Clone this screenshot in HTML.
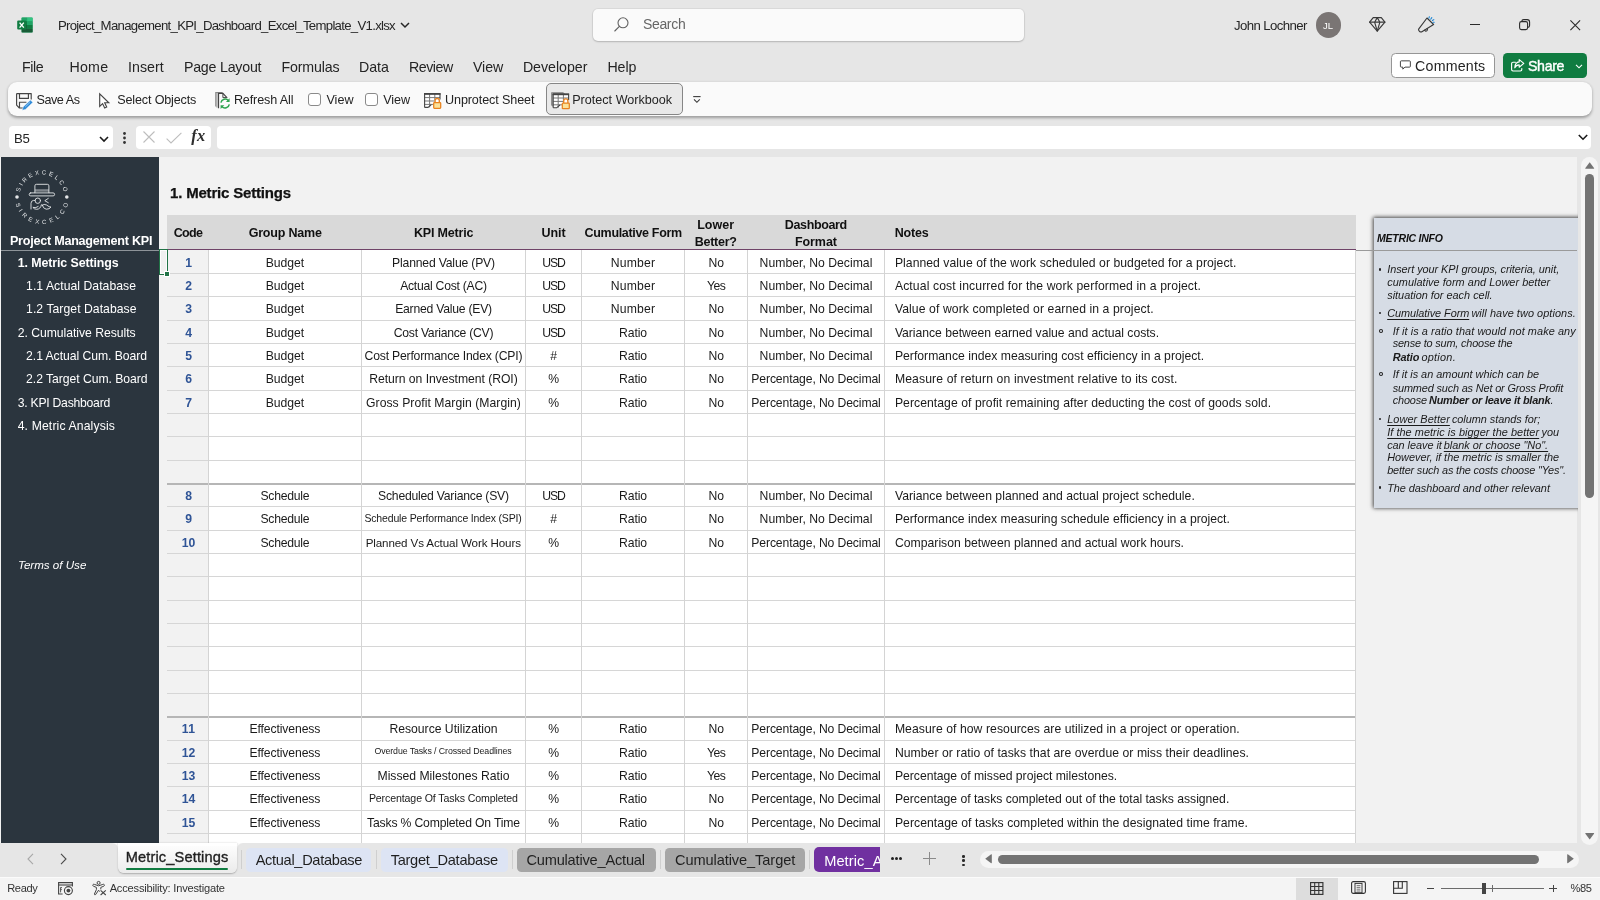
<!DOCTYPE html>
<html lang="en">
<head>
<meta charset="utf-8">
<title>Project_Management_KPI_Dashboard_Excel_Template_V1.xlsx</title>
<style>
*{box-sizing:border-box;margin:0;padding:0}
html,body{width:1600px;height:900px;overflow:hidden}
body{position:relative;background:#e6e6e6;will-change:transform;font-family:"Liberation Sans",sans-serif;color:#242424}
.abs{position:absolute}
.t{position:absolute;white-space:nowrap;line-height:1;color:#242424}
svg{position:absolute;overflow:visible}

/* sheet */
#sheet{left:0;top:157.4px;width:1577.3px;height:685.6px;background:#f2f2f2}
#side{left:1px;top:157.4px;width:157.6px;height:685.6px;background:#2b353e}
.tbl{position:absolute;background:#fff}
.codecol{position:absolute;background:#f2f2f2}
.hl{position:absolute;left:167px;width:1188.8px;height:1px;background:#d6d6d6}
.hl.thick{background:#b6b6b6;height:2px}
.vl{position:absolute;width:1px;background:#d4d4d4}
.c{position:absolute;height:23.33px;line-height:23.33px;font-size:12.2px;text-align:center;white-space:nowrap;color:#1a1a1a;letter-spacing:.05px}
.c.code{color:#2f5496;font-weight:bold}
.c.note{text-align:left;padding-left:11px}
.c.sm1{font-size:10px;letter-spacing:0}
.c.sm2{font-size:8px;letter-spacing:0}
.c.sm3{font-size:10px;letter-spacing:0}
.stab{position:absolute;top:847.7px;height:24.6px;border-radius:4.5px}
.sep{position:absolute;top:850px;height:19px;width:1px;background:#cfcfcf}
</style>
</head>
<body>

<!-- ======= TITLE BAR ======= -->
<svg style="left:17px;top:17px" width="16" height="16" viewBox="0 0 16 16"><rect x="4.6" y=".6" width="11" height="14.8" rx="1" fill="#21a366"/><rect x="10.1" y=".6" width="5.5" height="3.7" fill="#33c481"/><rect x="4.6" y=".6" width="5.5" height="3.7" fill="#21a366"/><rect x="4.6" y="4.3" width="5.5" height="3.7" fill="#107c41"/><rect x="10.1" y="4.3" width="5.5" height="3.7" fill="#21a366"/><rect x="4.6" y="8" width="5.5" height="3.7" fill="#185c37"/><rect x="10.1" y="8" width="5.5" height="3.7" fill="#107c41"/><rect x="4.6" y="11.7" width="11" height="3.7" fill="#185c37"/><rect x=".2" y="3.6" width="9" height="9" rx="1" fill="#107c41"/><path d="M2.6 5.6 L6.8 10.6 M6.8 5.6 L2.6 10.6" stroke="#fff" stroke-width="1.35" fill="none"/></svg>
<div class="t" style="left:57.90px;top:18.83px;font-size:13.2px;letter-spacing:-0.708px;color:#262626;">Project_Management_KPI_Dashboard_Excel_Template_V1.xlsx</div>
<svg style="left:400px;top:21px" width="10" height="8" viewBox="0 0 10 8"><path d="M1 2 L5 6 L9 2" fill="none" stroke="#262626" stroke-width="1.5"/></svg>

<div class="abs" style="left:593px;top:9px;width:431px;height:32px;background:#fafafa;border-radius:5px;box-shadow:0 0 0 1px rgba(0,0,0,.05),0 1px 2px rgba(0,0,0,.18)"></div>
<svg style="left:613px;top:16px" width="17" height="17" viewBox="0 0 17 17"><circle cx="10" cy="6.8" r="5" fill="none" stroke="#616161" stroke-width="1.1"/><path d="M6.4 10.4 L1.8 15" stroke="#616161" stroke-width="1.1" fill="none" stroke-linecap="round"/></svg>
<div class="t" style="left:642.90px;top:17.15px;font-size:14.0px;letter-spacing:-0.310px;color:#666666;">Search</div>

<div class="t" style="left:1234.00px;top:18.83px;font-size:13.2px;letter-spacing:-0.591px;color:#262626;">John Lochner</div>
<div class="abs" style="left:1315.7px;top:12.4px;width:25.2px;height:25.2px;border-radius:50%;background:#7a7574"></div>
<div class="t" style="left:1322.90px;top:20.96px;font-size:9.5px;letter-spacing:0.233px;color:#ffffff;">JL</div>
<svg style="left:1369.3px;top:17px" width="16.5" height="14.7" viewBox="0 0 16.5 14.7"><path d="M4.2 .6 H12.3 L15.9 5.2 L8.25 14.1 L.6 5.2 Z" fill="none" stroke="#3a3a3a" stroke-width="1.15" stroke-linejoin="round" stroke-linecap="round"/><path d="M.6 5.2 H15.9 M5.6 5.2 L8.25 .6 L10.9 5.2 L8.25 14.1 Z" fill="none" stroke="#3a3a3a" stroke-width="1.15" stroke-linejoin="round" stroke-linecap="round"/></svg>
<svg style="left:1417.7px;top:16.25px" width="16.5" height="16.5" viewBox="0 0 16.5 16.5"><path d="M9 2 L15.6 8.5 L3.5 15.9 Q2.5 16.3 1.7 15.5 L.9 14.7 Q.2 13.9 .8 12.9 Z" fill="none" stroke="#3a3a3a" stroke-width="1.15" stroke-linejoin="round" stroke-linecap="round"/><path d="M6.6 14.2 Q7.6 15.9 9 14.6 Q9.8 13.6 9.2 12.6" fill="none" stroke="#3a3a3a" stroke-width="1.15" stroke-linejoin="round" stroke-linecap="round"/><path d="M11.4 .7 L10.9 2.2 M13.8 1.6 L12.7 3.2 M15.8 3.6 L14.4 4.5 M16.2 6.2 L14.9 6.2" fill="none" stroke="#1b86d6" stroke-width="1.1" stroke-linecap="round"/></svg>
<div class="abs" style="left:1470px;top:23.7px;width:10.2px;height:1.1px;background:#2b2b2b"></div>
<svg style="left:1519.4px;top:19.25px" width="11.2" height="11.2" viewBox="0 0 11.2 11.2"><rect x=".6" y="2.6" width="8" height="8" rx="1.8" fill="none" stroke="#2b2b2b" stroke-width="1.1"/><path d="M2.8 2.4 Q2.9 .6 4.7 .6 H8.2 Q10.6 .6 10.6 3 V6.5 Q10.6 8.3 8.8 8.4" fill="none" stroke="#2b2b2b" stroke-width="1.1"/></svg>
<svg style="left:1569.7px;top:20px" width="10.5" height="10.5" viewBox="0 0 10.5 10.5"><path d="M.4 .4 L10.1 10.1 M10.1 .4 L.4 10.1" stroke="#2b2b2b" stroke-width="1.1" fill="none"/></svg>

<!-- ======= MENU ======= -->
<div class="t" style="left:21.90px;top:59.68px;font-size:14.2px;letter-spacing:-0.345px;">File</div>
<div class="t" style="left:69.40px;top:59.68px;font-size:14.2px;letter-spacing:0.280px;">Home</div>
<div class="t" style="left:127.90px;top:59.68px;font-size:14.2px;letter-spacing:0.081px;">Insert</div>
<div class="t" style="left:183.90px;top:59.68px;font-size:14.2px;letter-spacing:-0.204px;">Page Layout</div>
<div class="t" style="left:281.40px;top:59.68px;font-size:14.2px;letter-spacing:-0.147px;">Formulas</div>
<div class="t" style="left:358.90px;top:59.68px;font-size:14.2px;letter-spacing:0.001px;">Data</div>
<div class="t" style="left:408.90px;top:59.68px;font-size:14.2px;letter-spacing:-0.427px;">Review</div>
<div class="t" style="left:472.90px;top:59.68px;font-size:14.2px;letter-spacing:-0.006px;">View</div>
<div class="t" style="left:522.90px;top:59.68px;font-size:14.2px;letter-spacing:-0.025px;">Developer</div>
<div class="t" style="left:607.40px;top:59.68px;font-size:14.2px;letter-spacing:-0.051px;">Help</div>

<div class="abs" style="left:1391.3px;top:53.2px;width:104px;height:25px;background:#fff;border:1px solid #969696;border-radius:4.5px"></div>
<svg style="left:1400px;top:59.6px" width="11.6" height="10.8" viewBox="0 0 14 13"><path d="M1.5 1 H11.5 Q12.5 1 12.5 2 V7.6 Q12.5 8.6 11.5 8.6 H6 L3.4 11 V8.6 H1.5 Q.5 8.6 .5 7.6 V2 Q.5 1 1.5 1Z" fill="none" stroke="#333" stroke-width="1.1" stroke-linejoin="round"/></svg>
<div class="t" style="left:1415.10px;top:58.88px;font-size:14.2px;letter-spacing:0.206px;color:#242424;">Comments</div>
<div class="abs" style="left:1503.4px;top:53.2px;width:84px;height:25px;background:#107c41;border-radius:4.5px"></div>
<svg style="left:1510px;top:58px" width="16" height="15" viewBox="0 0 16 15"><path d="M5.5 4.2 H3 Q1.6 4.2 1.6 5.6 V11.6 Q1.6 13 3 13 H10.4 Q11.8 13 11.8 11.6 V10.6" fill="none" stroke="#fff" stroke-width="1.15" stroke-linecap="round"/><path d="M9.2 1.6 L13.8 5.4 L9.2 9.2 V6.9 Q6.2 6.9 4.8 9.8 Q5 4.4 9.2 3.9 Z" fill="none" stroke="#fff" stroke-width="1.15" stroke-linejoin="round"/></svg>
<div style="-webkit-text-stroke:.4px #fff"><div class="t" style="left:1528.00px;top:58.88px;font-size:14.2px;letter-spacing:-0.358px;color:#ffffff;">Share</div></div>
<svg style="left:1575px;top:63.6px" width="8" height="5" viewBox="0 0 8 5"><path d="M1 .8 L4 3.8 L7 .8" fill="none" stroke="#fff" stroke-width="1.15"/></svg>

<!-- ======= RIBBON ======= -->
<div class="abs" id="ribbon" style="left:8px;top:82.3px;width:1583.5px;height:34.2px;background:#fafafa;border-radius:9px;box-shadow:0 1.2px 3px rgba(0,0,0,.32)"></div>
<div class="abs" style="left:546.2px;top:83.2px;width:136.4px;height:31.4px;background:#e9e9e9;border:1px solid #868686;border-radius:5px"></div>
<svg style="left:16px;top:92.6px" width="17" height="17" viewBox="0 0 17 17"><path d="M.6 .6 H15.2 V6.5 M.6 .6 V12.2 L3.4 15 H7" fill="none" stroke="#444" stroke-width="1.15" stroke-linejoin="round"/><path d="M3.5 .6 V5.4 H12.4 V.6" fill="none" stroke="#444" stroke-width="1.15"/><path d="M3.5 15 V9.2 H10.4" fill="none" stroke="#444" stroke-width="1.15"/><path d="M7.1 14 L14.5 7 L16.8 9.4 L9.4 16.4 L6.2 17.3 Z" fill="#2b88d8" stroke="#fafafa" stroke-width=".5"/><path d="M9.2 14 L14.2 9.2" stroke="#bfe0f7" stroke-width=".7"/></svg>
<svg style="left:98.9px;top:93.1px" width="10.5" height="15.4" viewBox="0 0 10.5 15.4"><path d="M.7 .8 V13.4 L3.6 10.6 L5.7 15 L7.7 14 L5.7 9.8 H9.8 Z" fill="#fff" stroke="#444" stroke-width="1.15" stroke-linejoin="miter"/></svg>
<svg style="left:215px;top:92.4px" width="16" height="17" viewBox="0 0 16 17"><path d="M.6 .9 V14.6 M1.9 .6 V15.4" stroke="#9a9a9a" stroke-width="1.05" fill="none"/><path d="M.2 .55 H7.6" stroke="#8a8a8a" stroke-width="1.1" fill="none"/><path d="M3.5 16.2 V1.4 H7.9 L12.2 5.8" fill="none" stroke="#444" stroke-width="1.2"/><path d="M7.9 1.4 V5.6 H11.6" fill="none" stroke="#444" stroke-width="1"/><path d="M5.9 10.6 A4.3 4.3 0 0 1 13.4 8.6 M14.3 12.4 A4.3 4.3 0 0 1 6.8 14.5" fill="none" stroke="#2ea44f" stroke-width="1.5"/><path d="M14.6 6.2 V9.9 H10.9 Z M5.6 16.9 V13.2 H9.3 Z" fill="#2ea44f"/></svg>
<svg style="left:424px;top:93.1px" width="17.5" height="15.8" viewBox="0 0 17.5 15.8"><g transform="translate(0,0)"><rect x=".6" y="1" width="15.3" height="13.4" fill="#fff"/><path d="M.6 4.6 H16 M.6 8 H11 M.6 11.4 H9.6 M5.6 1 V14.4 M10.8 1 V7" stroke="#777" stroke-width="1" fill="none"/><path d="M.6 14.4 V.8 H16 V6.6 M.6 14.4 H4 L7.4 11.6" stroke="#444" stroke-width="1.1" fill="none"/><path d="M0 .9 H16.5" stroke="#444" stroke-width="1.8"/><path d="M11.1 9.6 V7.6 A2.1 2.1 0 0 1 15.3 7.6 V9.6" fill="none" stroke="#e8821e" stroke-width="1.35"/><rect x="9.7" y="9.6" width="7" height="5.7" rx=".7" fill="#fbe29a" stroke="#e8821e" stroke-width="1.25"/></g></svg>
<svg style="left:551.25px;top:92.1px" width="17.5" height="17" viewBox="0 0 17.5 17"><path d="M.5 13.6 V.6 H12.6 M1.6 14.4 V1.5 H13.6" fill="none" stroke="#8f8f8f" stroke-width="1"/><g transform="translate(1.6,1.4)"><rect x=".6" y="1" width="15.3" height="13.4" fill="#fff"/><path d="M.6 4.6 H16 M.6 8 H11 M.6 11.4 H9.6 M5.6 1 V14.4 M10.8 1 V7" stroke="#777" stroke-width="1" fill="none"/><path d="M.6 14.4 V.8 H16 V6.6 M.6 14.4 H4 L7.4 11.6" stroke="#444" stroke-width="1.1" fill="none"/><path d="M0 .9 H16.5" stroke="#444" stroke-width="1.8"/><path d="M11.1 9.6 V7.6 A2.1 2.1 0 0 1 15.3 7.6 V9.6" fill="none" stroke="#e8821e" stroke-width="1.35"/><rect x="9.7" y="9.6" width="7" height="5.7" rx=".7" fill="#fbe29a" stroke="#e8821e" stroke-width="1.25"/></g></svg>
<svg style="left:693.4px;top:96px" width="8" height="7" viewBox="0 0 8 7"><path d="M.2 .6 H7.6" stroke="#3a3a3a" stroke-width="1.1" fill="none"/><path d="M1 3.4 L3.9 6.3 L6.8 3.4" stroke="#3a3a3a" stroke-width="1.1" fill="none"/></svg>
<div class="t" style="left:36.50px;top:93.83px;font-size:12.6px;letter-spacing:-0.447px;">Save As</div>
<div class="t" style="left:117.30px;top:93.83px;font-size:12.6px;letter-spacing:-0.167px;">Select Objects</div>
<div class="t" style="left:233.90px;top:93.83px;font-size:12.6px;letter-spacing:-0.130px;">Refresh All</div>
<div class="abs" style="left:308.3px;top:92.8px;width:13px;height:13px;background:#fff;border:1.1px solid #8a8a8a;border-radius:3px"></div>
<div class="t" style="left:326.40px;top:93.83px;font-size:12.6px;letter-spacing:0.054px;">View</div>
<div class="abs" style="left:365.2px;top:92.8px;width:13px;height:13px;background:#fff;border:1.1px solid #8a8a8a;border-radius:3px"></div>
<div class="t" style="left:383.20px;top:93.83px;font-size:12.6px;letter-spacing:-0.071px;">View</div>
<div class="t" style="left:445.00px;top:93.83px;font-size:12.6px;letter-spacing:-0.110px;">Unprotect Sheet</div>
<div class="t" style="left:572.20px;top:93.83px;font-size:12.6px;letter-spacing:0.006px;">Protect Workbook</div>

<!-- ======= FORMULA BAR ======= -->
<div class="abs" style="left:9px;top:126.3px;width:104px;height:22.7px;background:#fff;border-radius:4px"></div>
<div class="abs" style="left:135.7px;top:126.3px;width:75.3px;height:22.7px;background:#fff;border-radius:4px"></div>
<div class="abs" style="left:216.5px;top:126.3px;width:1374.7px;height:22.7px;background:#fff;border-radius:4px"></div>
<div class="t" style="left:14.00px;top:131.63px;font-size:13.2px;letter-spacing:-0.223px;color:#262626;">B5</div>
<svg style="left:98.5px;top:136px" width="10" height="7" viewBox="0 0 10 7"><path d="M1 1 L5 5 L9 1" fill="none" stroke="#1a1a1a" stroke-width="1.6"/></svg>
<svg style="left:122.9px;top:132.4px" width="3" height="12" viewBox="0 0 3 12"><circle cx="1.5" cy="1.5" r="1.4" fill="#333"/><circle cx="1.5" cy="6" r="1.4" fill="#333"/><circle cx="1.5" cy="10.5" r="1.4" fill="#333"/></svg>
<svg style="left:142.5px;top:131.2px" width="12" height="12" viewBox="0 0 12 12"><path d="M.5 .5 L11.5 11.5 M11.5 .5 L.5 11.5" stroke="#bdbdbd" stroke-width="1.1" fill="none"/></svg>
<svg style="left:165.5px;top:131.5px" width="16" height="12" viewBox="0 0 16 12"><path d="M.6 6.6 L5 11 L15.4 .8" stroke="#bdbdbd" stroke-width="1.1" fill="none"/></svg>
<div class="t" style="left:191.2px;top:127.6px;font-family:'Liberation Serif',serif;font-style:italic;font-weight:bold;font-size:16.5px;color:#2f2f2f;letter-spacing:.4px">fx</div>
<svg style="left:1577.5px;top:133.5px" width="10" height="7" viewBox="0 0 10 7"><path d="M.8 1 L5 5.2 L9.2 1" fill="none" stroke="#1a1a1a" stroke-width="1.6"/></svg>

<!-- ======= SHEET ======= -->
<div class="abs" id="sheet"></div>
<div class="abs" id="side"></div>
<svg style="left:0;top:157px" width="160" height="90" viewBox="0 157 160 90"><defs><path id="lgt" d="M19.93 192.13 A22.5 22.5 0 0 1 63.78 191.75"/><path id="lgb" d="M15.66 203.79 A27.1 27.1 0 0 0 68.08 204.01"/></defs><text font-family="Liberation Sans, sans-serif" font-size="6" fill="#e4e6e8"><textPath href="#lgt" textLength="60.5" lengthAdjust="spacing">SIREXCELCO</textPath></text><text font-family="Liberation Sans, sans-serif" font-size="6" fill="#e4e6e8"><textPath href="#lgb" textLength="71.2" lengthAdjust="spacing">SIREXCELCO</textPath></text><circle cx="17.0" cy="197.0" r="1.8" fill="#e4e6e8"/><circle cx="66.8" cy="197.0" r="1.8" fill="#e4e6e8"/><path d="M34.9 192.7 V185.8 Q34.9 184.3 36.4 184.3 H47.4 Q48.9 184.3 48.9 185.8 V192.7" fill="none" stroke="#e4e6e8" stroke-width="0.9" stroke-linecap="round" stroke-linejoin="round"/><path d="M34.9 189.9 H48.9 M34.9 191 H48.9" fill="none" stroke="#e4e6e8" stroke-width=".6"/><rect x="29.2" y="192.9" width="25.4" height="3" rx="1.5" fill="none" stroke="#e4e6e8" stroke-width="0.9" stroke-linecap="round" stroke-linejoin="round"/><circle cx="37.8" cy="200.7" r="2.7" fill="none" stroke="#e4e6e8" stroke-width="0.9" stroke-linecap="round" stroke-linejoin="round"/><path d="M31 209 V203.4 Q31 200.6 33.6 200.4 L35 200.5" fill="none" stroke="#e4e6e8" stroke-width="0.9" stroke-linecap="round" stroke-linejoin="round"/><path d="M48.3 198.4 L44.8 200.7 L48.3 202.7" fill="none" stroke="#e4e6e8" stroke-width="0.9" stroke-linecap="round" stroke-linejoin="round"/><path d="M41.4 204.8 Q40.6 209.2 36.6 209.3 Q34 209.2 32.9 207.4 Q36 208.3 38.2 206.5" fill="none" stroke="#e4e6e8" stroke-width="0.9" stroke-linecap="round" stroke-linejoin="round"/><path d="M42.3 205.2 Q44 203.6 46.6 205 Q49.4 207.4 51 207 Q49.4 209.4 46.2 209.2 Q43 208.6 42.3 205.2 Z" fill="none" stroke="#e4e6e8" stroke-width="0.9" stroke-linecap="round" stroke-linejoin="round"/></svg>
<div class="t" style="left:9.90px;top:234.93px;font-size:12.6px;letter-spacing:-0.243px;font-weight:bold;color:#ffffff;">Project Management KPI</div>
<div class="t" style="left:17.70px;top:256.60px;font-size:12.4px;letter-spacing:-0.093px;font-weight:bold;color:#ffffff;">1. Metric Settings</div>
<div class="t" style="left:26.10px;top:279.57px;font-size:12.2px;letter-spacing:0.042px;color:#ffffff;">1.1 Actual Database</div>
<div class="t" style="left:26.10px;top:302.57px;font-size:12.2px;letter-spacing:0.050px;color:#ffffff;">1.2 Target Database</div>
<div class="t" style="left:17.70px;top:326.57px;font-size:12.2px;letter-spacing:-0.031px;color:#ffffff;">2. Cumulative Results</div>
<div class="t" style="left:26.10px;top:349.57px;font-size:12.2px;letter-spacing:-0.051px;color:#ffffff;">2.1 Actual Cum. Board</div>
<div class="t" style="left:26.10px;top:372.57px;font-size:12.2px;letter-spacing:-0.044px;color:#ffffff;">2.2 Target Cum. Board</div>
<div class="t" style="left:17.70px;top:396.57px;font-size:12.2px;letter-spacing:-0.244px;color:#ffffff;">3. KPI Dashboard</div>
<div class="t" style="left:17.70px;top:419.57px;font-size:12.2px;letter-spacing:0.138px;color:#ffffff;">4. Metric Analysis</div>
<div class="t" style="left:17.90px;top:558.98px;font-size:11.6px;letter-spacing:-0.004px;font-style:italic;color:#ffffff;">Terms of Use</div>

<div style="-webkit-text-stroke:.25px #111"><div class="t" style="left:170.00px;top:184.80px;font-size:15.0px;letter-spacing:-0.178px;font-weight:bold;color:#111111;">1. Metric Settings</div></div>
<div class="abs" style="left:167px;top:215px;width:1188.8px;height:35px;background:#d9d9d9"></div>
<div class="t" style="left:173.65px;top:227.42px;font-size:12.5px;letter-spacing:-0.625px;font-weight:bold;color:#111;">Code</div>
<div class="t" style="left:248.65px;top:227.42px;font-size:12.5px;letter-spacing:-0.201px;font-weight:bold;color:#111;">Group Name</div>
<div class="t" style="left:413.90px;top:227.42px;font-size:12.5px;letter-spacing:-0.163px;font-weight:bold;color:#111;">KPI Metric</div>
<div class="t" style="left:541.40px;top:227.42px;font-size:12.5px;letter-spacing:0.025px;font-weight:bold;color:#111;">Unit</div>
<div class="t" style="left:584.60px;top:227.42px;font-size:12.5px;letter-spacing:-0.327px;font-weight:bold;color:#111;">Cumulative Form</div>
<div class="t" style="left:697.20px;top:219.02px;font-size:12.5px;letter-spacing:0.038px;font-weight:bold;color:#111;">Lower</div>
<div class="t" style="left:694.70px;top:235.52px;font-size:12.5px;letter-spacing:-0.251px;font-weight:bold;color:#111;">Better?</div>
<div class="t" style="left:784.80px;top:219.02px;font-size:12.5px;letter-spacing:-0.354px;font-weight:bold;color:#111;">Dashboard</div>
<div class="t" style="left:794.90px;top:235.52px;font-size:12.5px;letter-spacing:-0.061px;font-weight:bold;color:#111;">Format</div>
<div class="t" style="left:894.80px;top:227.42px;font-size:12.5px;letter-spacing:-0.226px;font-weight:bold;color:#111;">Notes</div>
<div class="tbl" style="left:167px;top:250.0px;width:1188.6px;height:593.0px"></div>
<div class="codecol" style="left:167px;top:250.0px;width:41px;height:593.0px"></div>
<div class="hl" style="top:273px"></div>
<div class="hl" style="top:296px"></div>
<div class="hl" style="top:320px"></div>
<div class="hl" style="top:343px"></div>
<div class="hl" style="top:366px"></div>
<div class="hl" style="top:390px"></div>
<div class="hl" style="top:413px"></div>
<div class="hl" style="top:436px"></div>
<div class="hl" style="top:460px"></div>
<div class="hl thick" style="top:482.90px"></div>
<div class="hl" style="top:506px"></div>
<div class="hl" style="top:530px"></div>
<div class="hl" style="top:553px"></div>
<div class="hl" style="top:576px"></div>
<div class="hl" style="top:600px"></div>
<div class="hl" style="top:623px"></div>
<div class="hl" style="top:646px"></div>
<div class="hl" style="top:670px"></div>
<div class="hl" style="top:693px"></div>
<div class="hl thick" style="top:715.90px"></div>
<div class="hl" style="top:740px"></div>
<div class="hl" style="top:763px"></div>
<div class="hl" style="top:786px"></div>
<div class="hl" style="top:810px"></div>
<div class="hl" style="top:833px"></div>
<div class="vl" style="left:208px;top:250.0px;height:593.0px"></div>
<div class="vl" style="left:361px;top:250.0px;height:593.0px"></div>
<div class="vl" style="left:525px;top:250.0px;height:593.0px"></div>
<div class="vl" style="left:581px;top:250.0px;height:593.0px"></div>
<div class="vl" style="left:684px;top:250.0px;height:593.0px"></div>
<div class="vl" style="left:747px;top:250.0px;height:593.0px"></div>
<div class="vl" style="left:884px;top:250.0px;height:593.0px"></div>
<div class="vl" style="left:1355px;top:250.0px;height:593.0px"></div>
<div class="t" style="left:185.21px;top:256.72px;font-size:12.2px;letter-spacing:0.000px;font-weight:bold;color:#2f5496;">1</div>
<div class="t" style="left:265.63px;top:256.72px;font-size:12.2px;letter-spacing:-0.021px;color:#1a1a1a;">Budget</div>
<div class="t" style="left:392.08px;top:256.72px;font-size:12.2px;letter-spacing:-0.184px;color:#1a1a1a;">Planned Value (PV)</div>
<div class="t" style="left:542.14px;top:256.72px;font-size:12.2px;letter-spacing:-0.977px;color:#1a1a1a;">USD</div>
<div class="t" style="left:610.83px;top:256.72px;font-size:12.2px;letter-spacing:0.175px;color:#1a1a1a;">Number</div>
<div class="t" style="left:708.40px;top:256.72px;font-size:12.2px;letter-spacing:0.002px;color:#1a1a1a;">No</div>
<div class="t" style="left:759.60px;top:256.72px;font-size:12.2px;letter-spacing:0.019px;color:#1a1a1a;">Number, No Decimal</div>
<div class="t" style="left:894.90px;top:256.72px;font-size:12.2px;letter-spacing:0.045px;color:#1a1a1a;">Planned value of the work scheduled or budgeted for a project.</div>
<div class="t" style="left:185.21px;top:279.72px;font-size:12.2px;letter-spacing:0.000px;font-weight:bold;color:#2f5496;">2</div>
<div class="t" style="left:265.63px;top:279.72px;font-size:12.2px;letter-spacing:-0.021px;color:#1a1a1a;">Budget</div>
<div class="t" style="left:400.14px;top:279.72px;font-size:12.2px;letter-spacing:-0.252px;color:#1a1a1a;">Actual Cost (AC)</div>
<div class="t" style="left:542.14px;top:279.72px;font-size:12.2px;letter-spacing:-0.977px;color:#1a1a1a;">USD</div>
<div class="t" style="left:610.83px;top:279.72px;font-size:12.2px;letter-spacing:0.175px;color:#1a1a1a;">Number</div>
<div class="t" style="left:707.05px;top:279.72px;font-size:12.2px;letter-spacing:-0.534px;color:#1a1a1a;">Yes</div>
<div class="t" style="left:759.60px;top:279.72px;font-size:12.2px;letter-spacing:0.019px;color:#1a1a1a;">Number, No Decimal</div>
<div class="t" style="left:894.90px;top:279.72px;font-size:12.2px;letter-spacing:0.119px;color:#1a1a1a;">Actual cost incurred for the work performed in a project.</div>
<div class="t" style="left:185.21px;top:302.72px;font-size:12.2px;letter-spacing:0.000px;font-weight:bold;color:#2f5496;">3</div>
<div class="t" style="left:265.63px;top:302.72px;font-size:12.2px;letter-spacing:-0.021px;color:#1a1a1a;">Budget</div>
<div class="t" style="left:395.16px;top:302.72px;font-size:12.2px;letter-spacing:-0.237px;color:#1a1a1a;">Earned Value (EV)</div>
<div class="t" style="left:542.14px;top:302.72px;font-size:12.2px;letter-spacing:-0.977px;color:#1a1a1a;">USD</div>
<div class="t" style="left:610.83px;top:302.72px;font-size:12.2px;letter-spacing:0.175px;color:#1a1a1a;">Number</div>
<div class="t" style="left:708.40px;top:302.72px;font-size:12.2px;letter-spacing:0.002px;color:#1a1a1a;">No</div>
<div class="t" style="left:759.60px;top:302.72px;font-size:12.2px;letter-spacing:0.019px;color:#1a1a1a;">Number, No Decimal</div>
<div class="t" style="left:894.90px;top:302.72px;font-size:12.2px;letter-spacing:0.091px;color:#1a1a1a;">Value of work completed or earned in a project.</div>
<div class="t" style="left:185.21px;top:326.72px;font-size:12.2px;letter-spacing:0.000px;font-weight:bold;color:#2f5496;">4</div>
<div class="t" style="left:265.63px;top:326.72px;font-size:12.2px;letter-spacing:-0.021px;color:#1a1a1a;">Budget</div>
<div class="t" style="left:393.71px;top:326.72px;font-size:12.2px;letter-spacing:-0.250px;color:#1a1a1a;">Cost Variance (CV)</div>
<div class="t" style="left:542.14px;top:326.72px;font-size:12.2px;letter-spacing:-0.977px;color:#1a1a1a;">USD</div>
<div class="t" style="left:618.99px;top:326.72px;font-size:12.2px;letter-spacing:-0.074px;color:#1a1a1a;">Ratio</div>
<div class="t" style="left:708.40px;top:326.72px;font-size:12.2px;letter-spacing:0.002px;color:#1a1a1a;">No</div>
<div class="t" style="left:759.60px;top:326.72px;font-size:12.2px;letter-spacing:0.019px;color:#1a1a1a;">Number, No Decimal</div>
<div class="t" style="left:894.90px;top:326.72px;font-size:12.2px;letter-spacing:-0.027px;color:#1a1a1a;">Variance between earned value and actual costs.</div>
<div class="t" style="left:185.21px;top:349.72px;font-size:12.2px;letter-spacing:0.000px;font-weight:bold;color:#2f5496;">5</div>
<div class="t" style="left:265.63px;top:349.72px;font-size:12.2px;letter-spacing:-0.021px;color:#1a1a1a;">Budget</div>
<div class="t" style="left:364.59px;top:349.72px;font-size:12.2px;letter-spacing:-0.196px;color:#1a1a1a;">Cost Performance Index (CPI)</div>
<div class="t" style="left:550.26px;top:349.72px;font-size:12.2px;letter-spacing:0.000px;color:#1a1a1a;">#</div>
<div class="t" style="left:618.99px;top:349.72px;font-size:12.2px;letter-spacing:-0.074px;color:#1a1a1a;">Ratio</div>
<div class="t" style="left:708.40px;top:349.72px;font-size:12.2px;letter-spacing:0.002px;color:#1a1a1a;">No</div>
<div class="t" style="left:759.60px;top:349.72px;font-size:12.2px;letter-spacing:0.019px;color:#1a1a1a;">Number, No Decimal</div>
<div class="t" style="left:894.90px;top:349.72px;font-size:12.2px;letter-spacing:0.010px;color:#1a1a1a;">Performance index measuring cost efficiency in a project.</div>
<div class="t" style="left:185.21px;top:372.72px;font-size:12.2px;letter-spacing:0.000px;font-weight:bold;color:#2f5496;">6</div>
<div class="t" style="left:265.63px;top:372.72px;font-size:12.2px;letter-spacing:-0.021px;color:#1a1a1a;">Budget</div>
<div class="t" style="left:369.21px;top:372.72px;font-size:12.2px;letter-spacing:-0.045px;color:#1a1a1a;">Return on Investment (ROI)</div>
<div class="t" style="left:548.23px;top:372.72px;font-size:12.2px;letter-spacing:0.000px;color:#1a1a1a;">%</div>
<div class="t" style="left:618.99px;top:372.72px;font-size:12.2px;letter-spacing:-0.074px;color:#1a1a1a;">Ratio</div>
<div class="t" style="left:708.40px;top:372.72px;font-size:12.2px;letter-spacing:0.002px;color:#1a1a1a;">No</div>
<div class="t" style="left:751.29px;top:372.72px;font-size:12.2px;letter-spacing:-0.123px;color:#1a1a1a;">Percentage, No Decimal</div>
<div class="t" style="left:894.90px;top:372.72px;font-size:12.2px;letter-spacing:0.118px;color:#1a1a1a;">Measure of return on investment relative to its cost.</div>
<div class="t" style="left:185.21px;top:396.72px;font-size:12.2px;letter-spacing:0.000px;font-weight:bold;color:#2f5496;">7</div>
<div class="t" style="left:265.63px;top:396.72px;font-size:12.2px;letter-spacing:-0.021px;color:#1a1a1a;">Budget</div>
<div class="t" style="left:366.06px;top:396.72px;font-size:12.2px;letter-spacing:0.039px;color:#1a1a1a;">Gross Profit Margin (Margin)</div>
<div class="t" style="left:548.23px;top:396.72px;font-size:12.2px;letter-spacing:0.000px;color:#1a1a1a;">%</div>
<div class="t" style="left:618.99px;top:396.72px;font-size:12.2px;letter-spacing:-0.074px;color:#1a1a1a;">Ratio</div>
<div class="t" style="left:708.40px;top:396.72px;font-size:12.2px;letter-spacing:0.002px;color:#1a1a1a;">No</div>
<div class="t" style="left:751.29px;top:396.72px;font-size:12.2px;letter-spacing:-0.123px;color:#1a1a1a;">Percentage, No Decimal</div>
<div class="t" style="left:894.90px;top:396.72px;font-size:12.2px;letter-spacing:0.051px;color:#1a1a1a;">Percentage of profit remaining after deducting the cost of goods sold.</div>
<div class="t" style="left:185.21px;top:489.72px;font-size:12.2px;letter-spacing:0.000px;font-weight:bold;color:#2f5496;">8</div>
<div class="t" style="left:260.41px;top:489.72px;font-size:12.2px;letter-spacing:-0.236px;color:#1a1a1a;">Schedule</div>
<div class="t" style="left:378.09px;top:489.72px;font-size:12.2px;letter-spacing:-0.225px;color:#1a1a1a;">Scheduled Variance (SV)</div>
<div class="t" style="left:542.14px;top:489.72px;font-size:12.2px;letter-spacing:-0.977px;color:#1a1a1a;">USD</div>
<div class="t" style="left:618.99px;top:489.72px;font-size:12.2px;letter-spacing:-0.074px;color:#1a1a1a;">Ratio</div>
<div class="t" style="left:708.40px;top:489.72px;font-size:12.2px;letter-spacing:0.002px;color:#1a1a1a;">No</div>
<div class="t" style="left:759.60px;top:489.72px;font-size:12.2px;letter-spacing:0.019px;color:#1a1a1a;">Number, No Decimal</div>
<div class="t" style="left:894.90px;top:489.72px;font-size:12.2px;letter-spacing:0.025px;color:#1a1a1a;">Variance between planned and actual project schedule.</div>
<div class="t" style="left:185.21px;top:512.72px;font-size:12.2px;letter-spacing:0.000px;font-weight:bold;color:#2f5496;">9</div>
<div class="t" style="left:260.41px;top:512.72px;font-size:12.2px;letter-spacing:-0.236px;color:#1a1a1a;">Schedule</div>
<div class="t" style="left:364.40px;top:513.46px;font-size:10.5px;letter-spacing:-0.156px;color:#1a1a1a;">Schedule Performance Index (SPI)</div>
<div class="t" style="left:550.26px;top:512.72px;font-size:12.2px;letter-spacing:0.000px;color:#1a1a1a;">#</div>
<div class="t" style="left:618.99px;top:512.72px;font-size:12.2px;letter-spacing:-0.074px;color:#1a1a1a;">Ratio</div>
<div class="t" style="left:708.40px;top:512.72px;font-size:12.2px;letter-spacing:0.002px;color:#1a1a1a;">No</div>
<div class="t" style="left:759.60px;top:512.72px;font-size:12.2px;letter-spacing:0.019px;color:#1a1a1a;">Number, No Decimal</div>
<div class="t" style="left:894.90px;top:512.72px;font-size:12.2px;letter-spacing:-0.002px;color:#1a1a1a;">Performance index measuring schedule efficiency in a project.</div>
<div class="t" style="left:181.76px;top:536.72px;font-size:12.2px;letter-spacing:-0.044px;font-weight:bold;color:#2f5496;">10</div>
<div class="t" style="left:260.41px;top:536.72px;font-size:12.2px;letter-spacing:-0.236px;color:#1a1a1a;">Schedule</div>
<div class="t" style="left:365.65px;top:536.93px;font-size:11.6px;letter-spacing:-0.112px;color:#1a1a1a;">Planned Vs Actual Work Hours</div>
<div class="t" style="left:548.23px;top:536.72px;font-size:12.2px;letter-spacing:0.000px;color:#1a1a1a;">%</div>
<div class="t" style="left:618.99px;top:536.72px;font-size:12.2px;letter-spacing:-0.074px;color:#1a1a1a;">Ratio</div>
<div class="t" style="left:708.40px;top:536.72px;font-size:12.2px;letter-spacing:0.002px;color:#1a1a1a;">No</div>
<div class="t" style="left:751.29px;top:536.72px;font-size:12.2px;letter-spacing:-0.123px;color:#1a1a1a;">Percentage, No Decimal</div>
<div class="t" style="left:894.90px;top:536.72px;font-size:12.2px;letter-spacing:0.024px;color:#1a1a1a;">Comparison between planned and actual work hours.</div>
<div class="t" style="left:181.76px;top:722.72px;font-size:12.2px;letter-spacing:0.292px;font-weight:bold;color:#2f5496;">11</div>
<div class="t" style="left:249.40px;top:722.72px;font-size:12.2px;letter-spacing:-0.103px;color:#1a1a1a;">Effectiveness</div>
<div class="t" style="left:389.45px;top:722.72px;font-size:12.2px;letter-spacing:-0.014px;color:#1a1a1a;">Resource Utilization</div>
<div class="t" style="left:548.23px;top:722.72px;font-size:12.2px;letter-spacing:0.000px;color:#1a1a1a;">%</div>
<div class="t" style="left:618.99px;top:722.72px;font-size:12.2px;letter-spacing:-0.074px;color:#1a1a1a;">Ratio</div>
<div class="t" style="left:708.40px;top:722.72px;font-size:12.2px;letter-spacing:0.002px;color:#1a1a1a;">No</div>
<div class="t" style="left:751.29px;top:722.72px;font-size:12.2px;letter-spacing:-0.123px;color:#1a1a1a;">Percentage, No Decimal</div>
<div class="t" style="left:894.90px;top:722.72px;font-size:12.2px;letter-spacing:0.063px;color:#1a1a1a;">Measure of how resources are utilized in a project or operation.</div>
<div class="t" style="left:181.76px;top:746.72px;font-size:12.2px;letter-spacing:-0.044px;font-weight:bold;color:#2f5496;">12</div>
<div class="t" style="left:249.40px;top:746.72px;font-size:12.2px;letter-spacing:-0.103px;color:#1a1a1a;">Effectiveness</div>
<div class="t" style="left:374.40px;top:747.40px;font-size:8.8px;letter-spacing:-0.090px;color:#1a1a1a;">Overdue Tasks / Crossed Deadlines</div>
<div class="t" style="left:548.23px;top:746.72px;font-size:12.2px;letter-spacing:0.000px;color:#1a1a1a;">%</div>
<div class="t" style="left:618.99px;top:746.72px;font-size:12.2px;letter-spacing:-0.074px;color:#1a1a1a;">Ratio</div>
<div class="t" style="left:707.05px;top:746.72px;font-size:12.2px;letter-spacing:-0.534px;color:#1a1a1a;">Yes</div>
<div class="t" style="left:751.29px;top:746.72px;font-size:12.2px;letter-spacing:-0.123px;color:#1a1a1a;">Percentage, No Decimal</div>
<div class="t" style="left:894.90px;top:746.72px;font-size:12.2px;letter-spacing:0.049px;color:#1a1a1a;">Number or ratio of tasks that are overdue or miss their deadlines.</div>
<div class="t" style="left:181.76px;top:769.72px;font-size:12.2px;letter-spacing:-0.044px;font-weight:bold;color:#2f5496;">13</div>
<div class="t" style="left:249.40px;top:769.72px;font-size:12.2px;letter-spacing:-0.103px;color:#1a1a1a;">Effectiveness</div>
<div class="t" style="left:377.49px;top:769.72px;font-size:12.2px;letter-spacing:-0.004px;color:#1a1a1a;">Missed Milestones Ratio</div>
<div class="t" style="left:548.23px;top:769.72px;font-size:12.2px;letter-spacing:0.000px;color:#1a1a1a;">%</div>
<div class="t" style="left:618.99px;top:769.72px;font-size:12.2px;letter-spacing:-0.074px;color:#1a1a1a;">Ratio</div>
<div class="t" style="left:707.05px;top:769.72px;font-size:12.2px;letter-spacing:-0.534px;color:#1a1a1a;">Yes</div>
<div class="t" style="left:751.29px;top:769.72px;font-size:12.2px;letter-spacing:-0.123px;color:#1a1a1a;">Percentage, No Decimal</div>
<div class="t" style="left:894.90px;top:769.72px;font-size:12.2px;letter-spacing:-0.014px;color:#1a1a1a;">Percentage of missed project milestones.</div>
<div class="t" style="left:181.76px;top:792.72px;font-size:12.2px;letter-spacing:-0.044px;font-weight:bold;color:#2f5496;">14</div>
<div class="t" style="left:249.40px;top:792.72px;font-size:12.2px;letter-spacing:-0.103px;color:#1a1a1a;">Effectiveness</div>
<div class="t" style="left:368.90px;top:793.18px;font-size:10.6px;letter-spacing:-0.117px;color:#1a1a1a;">Percentage Of Tasks Completed</div>
<div class="t" style="left:548.23px;top:792.72px;font-size:12.2px;letter-spacing:0.000px;color:#1a1a1a;">%</div>
<div class="t" style="left:618.99px;top:792.72px;font-size:12.2px;letter-spacing:-0.074px;color:#1a1a1a;">Ratio</div>
<div class="t" style="left:708.40px;top:792.72px;font-size:12.2px;letter-spacing:0.002px;color:#1a1a1a;">No</div>
<div class="t" style="left:751.29px;top:792.72px;font-size:12.2px;letter-spacing:-0.123px;color:#1a1a1a;">Percentage, No Decimal</div>
<div class="t" style="left:894.90px;top:792.72px;font-size:12.2px;letter-spacing:-0.016px;color:#1a1a1a;">Percentage of tasks completed out of the total tasks assigned.</div>
<div class="t" style="left:181.76px;top:816.72px;font-size:12.2px;letter-spacing:-0.044px;font-weight:bold;color:#2f5496;">15</div>
<div class="t" style="left:249.40px;top:816.72px;font-size:12.2px;letter-spacing:-0.103px;color:#1a1a1a;">Effectiveness</div>
<div class="t" style="left:367.12px;top:816.72px;font-size:12.2px;letter-spacing:-0.178px;color:#1a1a1a;">Tasks % Completed On Time</div>
<div class="t" style="left:548.23px;top:816.72px;font-size:12.2px;letter-spacing:0.000px;color:#1a1a1a;">%</div>
<div class="t" style="left:618.99px;top:816.72px;font-size:12.2px;letter-spacing:-0.074px;color:#1a1a1a;">Ratio</div>
<div class="t" style="left:708.40px;top:816.72px;font-size:12.2px;letter-spacing:0.002px;color:#1a1a1a;">No</div>
<div class="t" style="left:751.29px;top:816.72px;font-size:12.2px;letter-spacing:-0.123px;color:#1a1a1a;">Percentage, No Decimal</div>
<div class="t" style="left:894.90px;top:816.72px;font-size:12.2px;letter-spacing:0.057px;color:#1a1a1a;">Percentage of tasks completed within the designated time frame.</div>
<div class="abs" style="left:167px;top:248.9px;width:1188.8px;height:1.5px;background:#6f4368"></div>

<!-- info panel -->
<div class="abs" style="left:1355px;top:200px;width:222.5px;height:330px;overflow:hidden">
  <div class="abs" style="left:19px;top:18px;width:230px;height:290px;background:#d6dce5;box-shadow:-1px -1px 4px .5px rgba(0,0,0,.55),0 0 4px rgba(0,0,0,.35)"></div>
</div>
<div class="t" style="left:1377.10px;top:233.11px;font-size:10.5px;letter-spacing:-0.240px;font-weight:bold;font-style:italic;color:#111;">METRIC INFO</div>
<div class="t" style="left:1387.20px;top:264.47px;font-size:10.9px;letter-spacing:-0.045px;font-style:italic;color:#1a1a1a;">Insert your KPI groups, criteria, unit,</div>
<div class="t" style="left:1387.20px;top:277.37px;font-size:10.9px;letter-spacing:0.045px;font-style:italic;color:#1a1a1a;">cumulative form and Lower better</div>
<div class="t" style="left:1387.20px;top:290.07px;font-size:10.9px;letter-spacing:-0.001px;font-style:italic;color:#1a1a1a;">situation for each cell.</div>
<div class="t" style="left:1392.70px;top:326.27px;font-size:10.9px;letter-spacing:0.081px;font-style:italic;color:#1a1a1a;">If it is a ratio that would not make any</div>
<div class="t" style="left:1392.70px;top:338.47px;font-size:10.9px;letter-spacing:-0.180px;font-style:italic;color:#1a1a1a;">sense to sum, choose the</div>
<div class="t" style="left:1392.70px;top:369.37px;font-size:10.9px;letter-spacing:-0.001px;font-style:italic;color:#1a1a1a;">If it is an amount which can be</div>
<div class="t" style="left:1392.70px;top:382.77px;font-size:10.9px;letter-spacing:-0.149px;font-style:italic;color:#1a1a1a;">summed such as Net or Gross Profit</div>
<div class="t" style="left:1387.20px;top:452.27px;font-size:10.9px;letter-spacing:0.002px;font-style:italic;color:#1a1a1a;">However, if the metric is smaller the</div>
<div class="t" style="left:1387.20px;top:465.17px;font-size:10.9px;letter-spacing:-0.170px;font-style:italic;color:#1a1a1a;">better such as the costs choose &quot;Yes&quot;.</div>
<div class="t" style="left:1387.20px;top:482.77px;font-size:10.9px;letter-spacing:-0.044px;font-style:italic;color:#1a1a1a;">The dashboard and other relevant</div>
<div class="t" style="left:1387.20px;top:307.87px;font-size:10.9px;letter-spacing:-0.059px;font-style:italic;color:#1a1a1a;text-decoration:underline;text-underline-offset:1.5px;">Cumulative Form</div>
<div class="t" style="left:1471.40px;top:307.87px;font-size:10.9px;letter-spacing:0.068px;font-style:italic;color:#1a1a1a;">will have two options.</div>
<div class="t" style="left:1392.70px;top:351.87px;font-size:10.9px;letter-spacing:-0.130px;font-weight:bold;font-style:italic;color:#1a1a1a;">Ratio</div>
<div class="t" style="left:1421.40px;top:351.87px;font-size:10.9px;letter-spacing:0.268px;font-style:italic;color:#1a1a1a;">option.</div>
<div class="t" style="left:1392.70px;top:395.17px;font-size:10.9px;letter-spacing:-0.125px;font-style:italic;color:#1a1a1a;">choose</div>
<div class="t" style="left:1429.00px;top:395.17px;font-size:10.9px;letter-spacing:-0.217px;font-weight:bold;font-style:italic;color:#1a1a1a;">Number or leave it blank</div>
<div class="t" style="left:1550.44px;top:395.17px;font-size:10.9px;letter-spacing:0.000px;font-style:italic;color:#1a1a1a;">.</div>
<div class="t" style="left:1387.20px;top:413.87px;font-size:10.9px;letter-spacing:0.075px;font-style:italic;color:#1a1a1a;text-decoration:underline;text-underline-offset:1.5px;">Lower Better</div>
<div class="t" style="left:1451.90px;top:413.87px;font-size:10.9px;letter-spacing:-0.031px;font-style:italic;color:#1a1a1a;">column stands for;</div>
<div class="t" style="left:1387.20px;top:426.77px;font-size:10.9px;letter-spacing:0.054px;font-style:italic;color:#1a1a1a;text-decoration:underline;text-underline-offset:1.5px;">If the metric is bigger the better</div>
<div class="t" style="left:1541.40px;top:426.77px;font-size:10.9px;letter-spacing:0.109px;font-style:italic;color:#1a1a1a;">you</div>
<div class="t" style="left:1387.20px;top:439.57px;font-size:10.9px;letter-spacing:-0.037px;font-style:italic;color:#1a1a1a;">can leave it</div>
<div class="t" style="left:1443.80px;top:439.57px;font-size:10.9px;letter-spacing:-0.014px;font-style:italic;color:#1a1a1a;text-decoration:underline;text-underline-offset:1.5px;">blank or choose &quot;No&quot;.</div>
<div class="abs" style="left:1378.6px;top:268.1px;width:2.6px;height:2.6px;border-radius:50%;background:#222"></div>
<div class="abs" style="left:1378.6px;top:311.5px;width:2.6px;height:2.6px;border-radius:50%;background:#222"></div>
<div class="abs" style="left:1378.6px;top:417.5px;width:2.6px;height:2.6px;border-radius:50%;background:#222"></div>
<div class="abs" style="left:1378.6px;top:486.4px;width:2.6px;height:2.6px;border-radius:50%;background:#222"></div>
<div class="abs" style="left:1378.6px;top:328.9px;width:4.8px;height:4.4px;border-radius:50%;border:.9px solid #222"></div>
<div class="abs" style="left:1378.6px;top:372.0px;width:4.8px;height:4.4px;border-radius:50%;border:.9px solid #222"></div>
<!-- freeze pane line -->
<div class="abs" style="left:1px;top:250px;width:158.5px;height:1px;background:#8e9499"></div>
<div class="abs" style="left:1355.8px;top:249.9px;width:221.5px;height:1px;background:#9a9a9a"></div>

<!-- selected cell -->
<div class="abs" style="left:159.3px;top:249.4px;width:8.7px;height:25.4px;border:1.5px solid #217346;background:#f0f0f0;box-shadow:inset 0 0 0 .8px #fff"></div>
<div class="abs" style="left:164.2px;top:271.2px;width:5.6px;height:5.4px;background:#fff"></div>
<div class="abs" style="left:165.2px;top:272.1px;width:3.9px;height:3.8px;background:#217346"></div>

<!-- ======= SHEET TABS ======= -->
<div class="abs" style="left:110px;top:843px;width:134px;height:8px;background:#fbfbfb"></div>
<div class="abs" style="left:0;top:843.2px;width:117.7px;height:33.3px;background:#e6e6e6;border-top-right-radius:6px"></div>
<div class="abs" style="left:237.2px;top:843.2px;width:1362.8px;height:33.3px;background:#e6e6e6;border-top-left-radius:6px"></div>
<div class="abs" style="left:117.7px;top:843px;width:119.4px;height:29.7px;background:linear-gradient(#ffffff 0%,#f6f6f6 45%,#ebebeb 100%);border-radius:0 0 6px 6px;box-shadow:0 .6px 1.6px rgba(0,0,0,.25)"></div>
<div class="abs" style="left:117.7px;top:842.6px;width:119.4px;height:3px;background:#fff"></div>
<div class="t" style="left:125.65px;top:849.89px;font-size:14.6px;letter-spacing:0.149px;color:#1f1f1f;-webkit-text-stroke:.35px #1f1f1f;">Metric_Settings</div>
<div class="abs" style="left:126px;top:868.2px;width:102.2px;height:1.9px;background:#107c41;border-radius:1px"></div>
<svg style="left:26.5px;top:853px" width="7" height="12" viewBox="0 0 7 12"><path d="M6 .8 L1 6 L6 11.2" fill="none" stroke="#a8a8a8" stroke-width="1.1"/></svg>
<svg style="left:60px;top:853px" width="7" height="12" viewBox="0 0 7 12"><path d="M1 .8 L6 6 L1 11.2" fill="none" stroke="#4a4a4a" stroke-width="1.1"/></svg>
<div class="stab" style="left:245.8px;width:125.69999999999999px;background:#dde4f4"></div>
<div class="t" style="left:255.65px;top:853.39px;font-size:14.6px;letter-spacing:-0.313px;color:#1f1f1f;">Actual_Database</div>
<div class="stab" style="left:381.25px;width:126.25px;background:#dde4f4"></div>
<div class="t" style="left:390.65px;top:853.39px;font-size:14.6px;letter-spacing:-0.263px;color:#1f1f1f;">Target_Database</div>
<div class="stab" style="left:516.75px;width:139.0px;background:#a6a6a6"></div>
<div class="t" style="left:526.40px;top:853.39px;font-size:14.6px;letter-spacing:-0.190px;color:#1f1f1f;">Cumulative_Actual</div>
<div class="stab" style="left:665px;width:140px;background:#a6a6a6"></div>
<div class="t" style="left:675.00px;top:853.39px;font-size:14.6px;letter-spacing:-0.090px;color:#1f1f1f;">Cumulative_Target</div>
<div class="sep" style="left:241.0px"></div>
<div class="sep" style="left:375.75px"></div>
<div class="sep" style="left:511.5px"></div>
<div class="sep" style="left:659.5px"></div>
<div class="sep" style="left:809.0px"></div>
<div class="abs" style="left:814.1px;top:847.4px;width:65.8px;height:25px;overflow:hidden"><div class="abs" style="left:0;top:0;width:120px;height:25px;background:#7030a0;border-radius:5px"></div><div class="t" style="left:10.05px;top:6.14px;font-size:14.6px;letter-spacing:0.093px;color:#ffffff;">Metric_A</div></div>
<div class="abs" style="left:890.50px;top:857.2px;width:3.1px;height:3.1px;border-radius:50%;background:#222"></div>
<div class="abs" style="left:894.75px;top:857.2px;width:3.1px;height:3.1px;border-radius:50%;background:#222"></div>
<div class="abs" style="left:899.00px;top:857.2px;width:3.1px;height:3.1px;border-radius:50%;background:#222"></div>
<div class="abs" style="left:922.5px;top:858.3px;width:13px;height:1px;background:#8a8a8a"></div>
<div class="abs" style="left:928.5px;top:852.3px;width:1px;height:13px;background:#8a8a8a"></div>
<div class="abs" style="left:961.9px;top:854.9px;width:2.7px;height:2.7px;border-radius:50%;background:#2a2a2a"></div>
<div class="abs" style="left:961.9px;top:859.3px;width:2.7px;height:2.7px;border-radius:50%;background:#2a2a2a"></div>
<div class="abs" style="left:961.9px;top:863.7px;width:2.7px;height:2.7px;border-radius:50%;background:#2a2a2a"></div>
<div class="abs" style="left:980px;top:851px;width:598.7px;height:17px;background:#f5f5f5;border-radius:8.5px"></div>
<svg style="left:984.6px;top:854.3px" width="7" height="9.4" viewBox="0 0 7 9.4"><path d="M.2 4.7 L6.2 .2 Q6.8 .1 6.8 .6 V8.8 Q6.8 9.3 6.2 9.2 Z" fill="#737373"/></svg>
<div class="abs" style="left:997.5px;top:854.8px;width:541.5px;height:9.2px;background:#737373;border-radius:4.6px"></div>
<svg style="left:1566.6px;top:854.3px" width="7" height="9.4" viewBox="0 0 7 9.4"><path d="M6.8 4.7 L.8 .2 Q.2 .1 .2 .6 V8.8 Q.2 9.3 .8 9.2 Z" fill="#737373"/></svg>

<!-- vertical scrollbar -->
<div class="abs" style="left:1581px;top:157px;width:17.2px;height:688px;background:#f5f5f5;border-radius:8.6px"></div>
<svg style="left:1585px;top:161.8px" width="9.4" height="6.8" viewBox="0 0 9.4 6.8"><path d="M4.7 .2 L9.2 6.2 Q9.3 6.7 8.8 6.7 H.6 Q.1 6.7 .2 6.2 Z" fill="#737373"/></svg>
<div class="abs" style="left:1585.2px;top:174px;width:8.8px;height:324px;background:#737373;border-radius:4.4px"></div>
<svg style="left:1585px;top:832.6px" width="9.4" height="6.8" viewBox="0 0 9.4 6.8"><path d="M4.7 6.6 L9.2 .6 Q9.3 .1 8.8 .1 H.6 Q.1 .1 .2 .6 Z" fill="#737373"/></svg>

<!-- ======= STATUS BAR ======= -->
<div class="abs" style="left:0;top:876.5px;width:1600px;height:23.5px;background:#f4f4f4;border-top:1px solid #fbfbfb"></div>
<svg style="left:58.2px;top:882.2px" width="15.3" height="13" viewBox="0 0 15.3 13"><path d="M4.6 12 H.6 V.6 H14.4 V4.6" fill="none" stroke="#444" stroke-width="1.1"/><path d="M.6 3 H14.4" stroke="#444" stroke-width="1.1"/><path d="M2.6 5.4 V10.4 M2.6 5.6 H4 M2.6 7.6 H3.8" stroke="#444" stroke-width=".9" fill="none"/><circle cx="10.4" cy="8.6" r="4" fill="#f3f3f3" stroke="#444" stroke-width="1.1"/><circle cx="10.4" cy="8.6" r="1.9" fill="#444"/></svg>
<svg style="left:91.8px;top:881.3px" width="15" height="14.6" viewBox="0 0 15 14.6"><circle cx="6.6" cy="1.9" r="1.5" fill="none" stroke="#444" stroke-width="1"/><path d="M1 3.6 Q.4 4.6 1.4 5.2 L4.4 6.4 V8.6 L2.4 13 Q2.4 14.2 3.6 13.6 L6.6 9.2 L7.6 10.6 M8.8 8.4 V6.4 L11.8 5.2 Q12.8 4.6 12.2 3.6 Q11.6 3 10.8 3.4 L6.6 4.8 L2.4 3.4 Q1.6 3 1 3.6" fill="none" stroke="#444" stroke-width="1" stroke-linejoin="round"/><path d="M8.6 9.4 L13.8 14 M13.8 9.4 L8.6 14" stroke="#444" stroke-width="1.1" fill="none"/></svg>
<div class="abs" style="left:1296px;top:877.5px;width:41.6px;height:22.5px;background:#dddddd"></div>
<svg style="left:1309.6px;top:881.5px" width="13.5" height="13" viewBox="0 0 13.5 13"><rect x=".6" y=".6" width="12.3" height="11.8" fill="none" stroke="#333" stroke-width="1.15"/><path d="M4.7 .6 V12.4 M8.8 .6 V12.4 M.6 4.55 H13 M.6 8.45 H13" stroke="#333" stroke-width="1.05" fill="none"/></svg>
<svg style="left:1351px;top:881.2px" width="15" height="13" viewBox="0 0 15 13"><rect x=".6" y=".6" width="13.8" height="11.8" rx="1.6" fill="none" stroke="#333" stroke-width="1.1"/><rect x="4" y="2.4" width="7" height="9.4" fill="none" stroke="#333" stroke-width=".95"/><path d="M5.6 4.6 H9.4 M5.6 6.4 H9.4 M5.6 8.2 H9.4 M5.6 10 H9.4" stroke="#444" stroke-width=".7"/></svg>
<svg style="left:1392.9px;top:881.2px" width="14.6" height="13" viewBox="0 0 14.6 13"><rect x=".6" y=".6" width="13.4" height="11.8" fill="none" stroke="#333" stroke-width="1.1"/><path d="M5.3 .6 V7.2 M.6 7.2 H9.3 V.6" stroke="#333" stroke-width="1.1" fill="none"/></svg>
<div class="abs" style="left:1426.8px;top:887.9px;width:7.6px;height:1px;background:#444"></div>
<div class="abs" style="left:1440.8px;top:887.9px;width:103.2px;height:1px;background:#6b6b6b"></div>
<div class="abs" style="left:1491.6px;top:885.2px;width:1px;height:6.5px;background:#6b6b6b"></div>
<div class="abs" style="left:1481.8px;top:882.6px;width:4.2px;height:11.5px;background:#444"></div>
<div class="abs" style="left:1549.3px;top:887.9px;width:7.6px;height:1px;background:#444"></div>
<div class="abs" style="left:1552.6px;top:884.6px;width:1px;height:7.6px;background:#444"></div>
<div class="t" style="left:7.20px;top:883.10px;font-size:11.1px;letter-spacing:-0.337px;color:#333;">Ready</div>
<div class="t" style="left:109.65px;top:883.10px;font-size:11.1px;letter-spacing:-0.194px;color:#333;">Accessibility: Investigate</div>
<div class="t" style="left:1570.40px;top:883.20px;font-size:11.1px;letter-spacing:-0.305px;color:#333;">%85</div>

</body>
</html>
